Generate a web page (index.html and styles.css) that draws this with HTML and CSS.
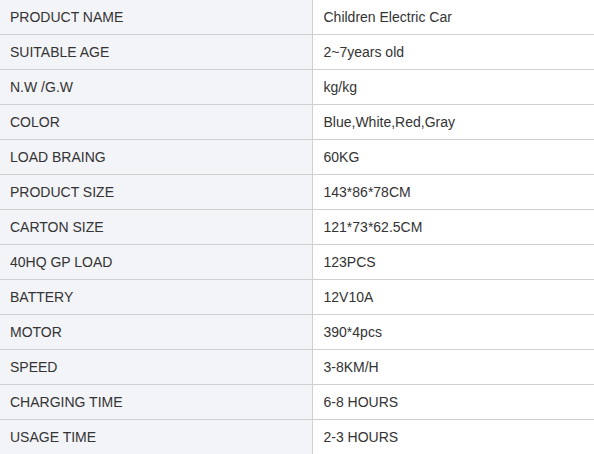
FILE: index.html
```html
<!DOCTYPE html>
<html>
<head>
<meta charset="utf-8">
<link rel="stylesheet" href="styles.css">
</head>
<body>
<table class="spec">
<tbody>
<tr><td class="k">PRODUCT NAME</td><td class="v">Children Electric Car</td></tr>
<tr><td class="k">SUITABLE AGE</td><td class="v">2~7years old</td></tr>
<tr><td class="k">N.W /G.W</td><td class="v">kg/kg</td></tr>
<tr><td class="k">COLOR</td><td class="v">Blue,White,Red,Gray</td></tr>
<tr><td class="k">LOAD BRAING</td><td class="v">60KG</td></tr>
<tr><td class="k">PRODUCT SIZE</td><td class="v">143*86*78CM</td></tr>
<tr><td class="k">CARTON SIZE</td><td class="v">121*73*62.5CM</td></tr>
<tr><td class="k">40HQ GP LOAD</td><td class="v">123PCS</td></tr>
<tr><td class="k">BATTERY</td><td class="v">12V10A</td></tr>
<tr><td class="k">MOTOR</td><td class="v">390*4pcs</td></tr>
<tr><td class="k">SPEED</td><td class="v">3-8KM/H</td></tr>
<tr><td class="k">CHARGING TIME</td><td class="v">6-8 HOURS</td></tr>
<tr><td class="k">USAGE TIME</td><td class="v">2-3 HOURS</td></tr>
</tbody>
</table>
</body>
</html>
```
FILE: styles.css
```css
html, body {
  margin: 0;
  padding: 0;
  background: #fff;
}
body {
  font-family: "Liberation Sans", Arial, sans-serif;
  font-size: 14px;
  color: #333;
  overflow: hidden;
}
.spec {
  width: 594px;
  border-collapse: collapse;
  table-layout: fixed;
}
.spec td {
  height: 35px;
  padding: 0 10px;
  border-bottom: 1px solid #d0d0d0;
  vertical-align: middle;
  line-height: 20px;
  box-sizing: border-box;
}
.spec tr:first-child td {
  height: 34px;
}
.spec .k {
  width: 312px;
  background: #f3f4f8;
  border-right: 1px solid #d0d0d0;
}
.spec .v {
  padding-left: 11px;
  background: #fff;
}
```
